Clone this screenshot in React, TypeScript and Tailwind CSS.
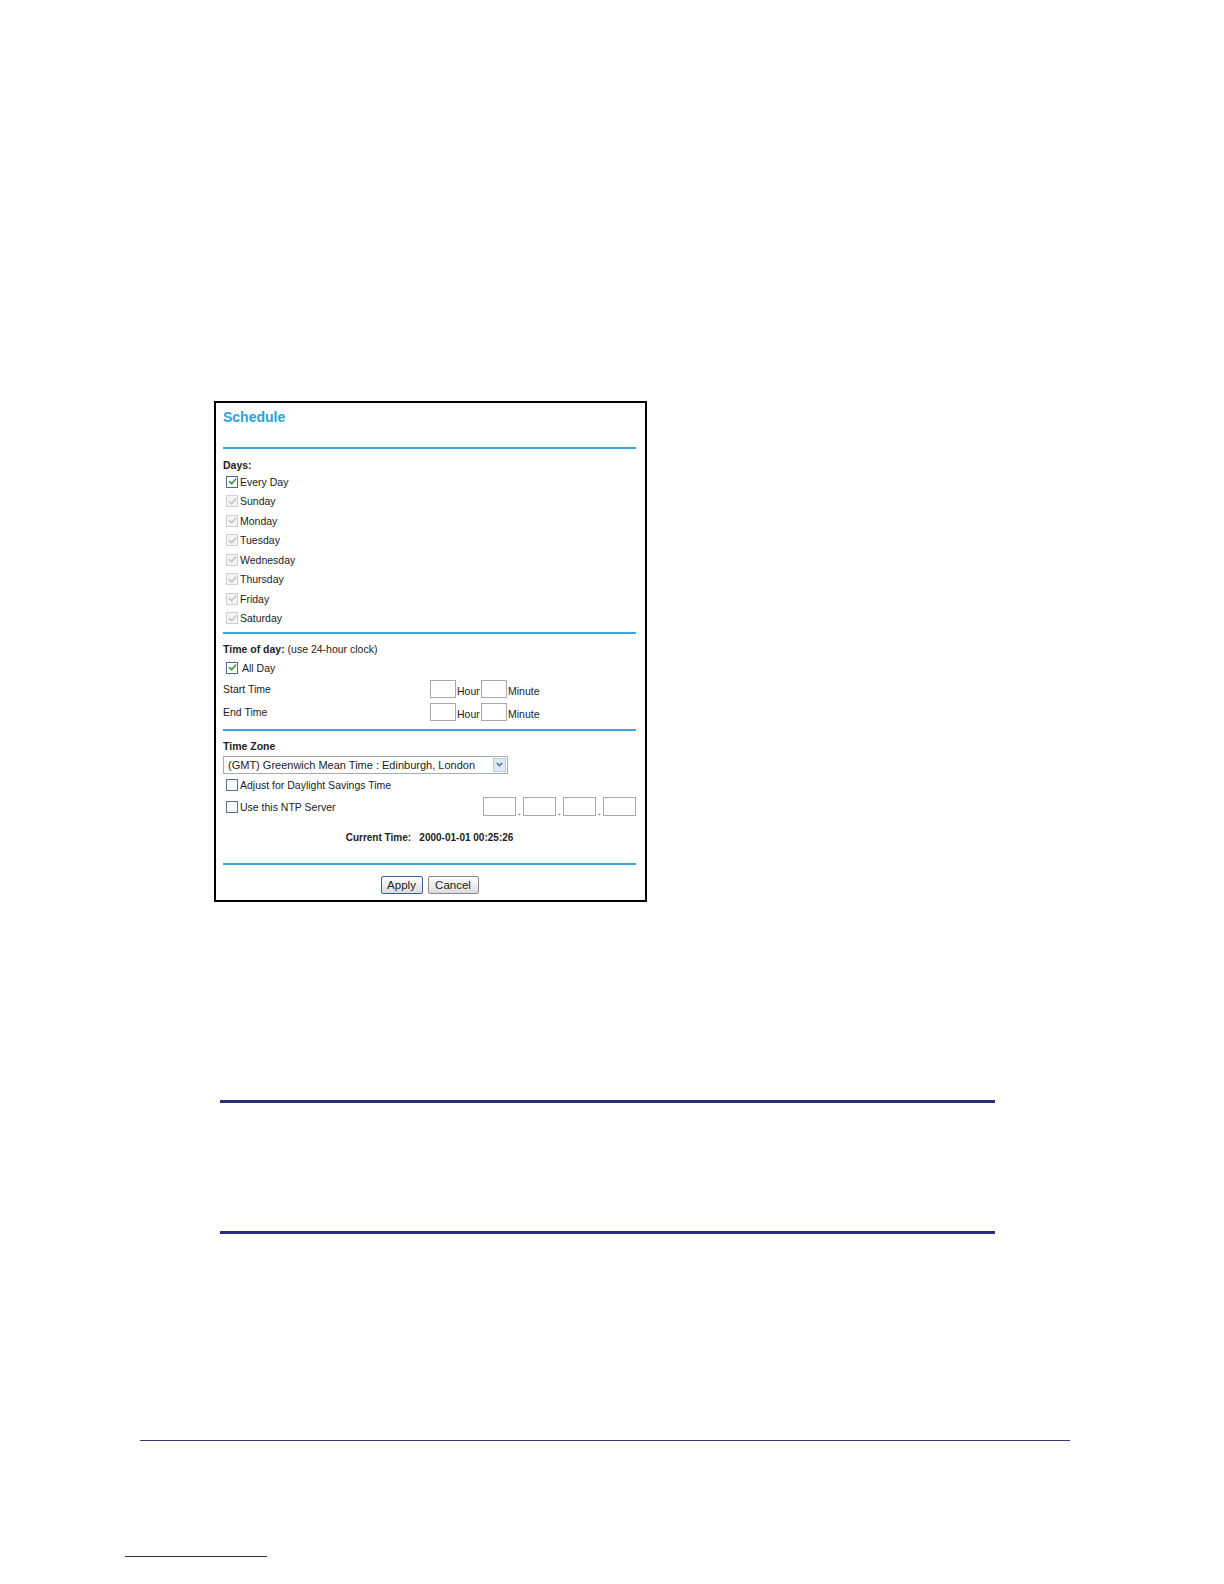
import React from "react";

function Check({ color }: { color: string }) {
  return (
    <svg width="9" height="9" viewBox="0 0 9 9" className="block">
      <path d="M1.5 4.6 L3.6 6.8 L7.6 2.2" fill="none" stroke={color} strokeWidth="1.6" strokeLinecap="round" strokeLinejoin="round" />
    </svg>
  );
}

function Box({ state }: { state: "on" | "disabled" | "off" }) {
  if (state === "on")
    return (
      <span className="flex h-[12px] w-[12px] items-center justify-center border border-[#4d6a8f] bg-white">
        <Check color="#2f9a2f" />
      </span>
    );
  if (state === "disabled")
    return (
      <span className="flex h-[12px] w-[12px] items-center justify-center border border-[#cfcfcf] bg-[#f4f4f4]">
        <Check color="#c4c4c4" />
      </span>
    );
  return <span className="block h-[12px] w-[12px] border border-[#5b6f8c] bg-[#fbfbfb]" />;
}

function Row({ state, label, gap = "gap-[2px]" }: { state: "on" | "disabled" | "off"; label: string; gap?: string }) {
  return (
    <div className={`flex h-[19.5px] items-center pl-[3px] ${gap}`}>
      <Box state={state} />
      <span>{label}</span>
    </div>
  );
}

function Rule() {
  return <div className="h-[2px] w-full bg-[#3aa7d8]" />;
}

function TimeRow({ label }: { label: string }) {
  return (
    <div className="flex h-[23px] items-center">
      <span className="w-[207px]">{label}</span>
      <span className="h-[18px] w-[26px] border border-[#a9a9a9] bg-white" />
      <span className="ml-[1px] mt-[4px] w-[23px]">Hour</span>
      <span className="ml-[1px] h-[18px] w-[26px] border border-[#a9a9a9] bg-white" />
      <span className="ml-[1px] mt-[4px]">Minute</span>
    </div>
  );
}

export default function App() {
  const days = ["Sunday", "Monday", "Tuesday", "Wednesday", "Thursday", "Friday", "Saturday"];
  return (
    <div className="relative flex h-[1584px] w-[1224px] flex-col items-start bg-white" style={{ fontFamily: '"Liberation Sans", Arial, sans-serif' }}>
      <div className="ml-[214px] mt-[401px] flex w-[433px] flex-col border-2 border-black pb-[6px] pl-[7px] pr-[9px] pt-[4px] text-[10.5px] leading-[14px] text-[#222]">
        <div className="h-[20px] text-[14px] font-bold leading-[20px] text-[#29a3d8]">Schedule</div>
        <div className="mt-[20px]"><Rule /></div>
        <div className="mt-[9px] h-[14px] font-bold">Days:</div>
        <Row state="on" label="Every Day" />
        {days.map((d) => (
          <Row key={d} state="disabled" label={d} />
        ))}
        <div className="mt-[4px]"><Rule /></div>
        <div className="mt-[8px] h-[14px]">
          <span className="font-bold">Time of day:</span> (use 24-hour clock)
        </div>
        <div className="mt-[2px]">
          <Row state="on" label="All Day" gap="gap-[4px]" />
        </div>
        <TimeRow label="Start Time" />
        <TimeRow label="End Time" />
        <div className="mt-[5px]"><Rule /></div>
        <div className="mt-[8px] h-[14px] font-bold">Time Zone</div>
        <div className="mt-[3px] flex h-[18px] w-[285px] items-center border border-[#a5acb5] bg-white">
          <span className="flex-1 pl-[4px] text-[11px]">(GMT) Greenwich Mean Time : Edinburgh, London</span>
          <span className="mr-[1px] flex h-[14px] w-[13px] items-center justify-center border border-[#b9c9e0] bg-[#dde7f5]">
            <svg width="7" height="5" viewBox="0 0 7 5" className="block">
              <path d="M0.8 1 L3.5 3.8 L6.2 1" fill="none" stroke="#4b6b9c" strokeWidth="1.4" />
            </svg>
          </span>
        </div>
        <div className="mt-[2px]">
          <Row state="off" label="Adjust for Daylight Savings Time" />
        </div>
        <div className="flex h-[23px] items-center justify-between">
          <div className="flex items-center gap-[2px] pl-[3px]">
            <Box state="off" />
            <span>Use this NTP Server</span>
          </div>
          <div className="flex items-end">
            <span className="h-[19px] w-[33px] border border-[#a9a9a9] bg-white" />
            <span className="w-[7px] text-center leading-[10px]">.</span>
            <span className="h-[19px] w-[33px] border border-[#a9a9a9] bg-white" />
            <span className="w-[7px] text-center leading-[10px]">.</span>
            <span className="h-[19px] w-[33px] border border-[#a9a9a9] bg-white" />
            <span className="w-[7px] text-center leading-[10px]">.</span>
            <span className="h-[19px] w-[33px] border border-[#a9a9a9] bg-white" />
          </div>
        </div>
        <div className="mt-[13px] h-[14px] text-center font-bold text-[10px]">
          Current Time:&nbsp;&nbsp; 2000-01-01 00:25:26
        </div>
        <div className="mt-[18px]"><Rule /></div>
        <div className="mt-[11px] flex justify-center gap-[5px]">
          <span className="flex h-[18px] w-[42px] items-center justify-center rounded-[2px] border border-[#3c5f9a] bg-gradient-to-b from-white to-[#dcdcdc] text-[11.5px]">Apply</span>
          <span className="flex h-[18px] w-[51px] items-center justify-center rounded-[2px] border border-[#8a8a8a] bg-gradient-to-b from-white to-[#dcdcdc] text-[11.5px]">Cancel</span>
        </div>
      </div>
      <div className="ml-[220px] mt-[198px] h-[3px] w-[775px] bg-[#2e2d7a]" />
      <div className="ml-[220px] mt-[128px] h-[3px] w-[775px] bg-[#2e2d7a]" />
      <div className="ml-[140px] mt-[206px] h-[1px] w-[930px] bg-[#3b3570]" />
      <div className="ml-[125px] mt-[115px] h-[1px] w-[142px] bg-[#333]" />
    </div>
  );
}
